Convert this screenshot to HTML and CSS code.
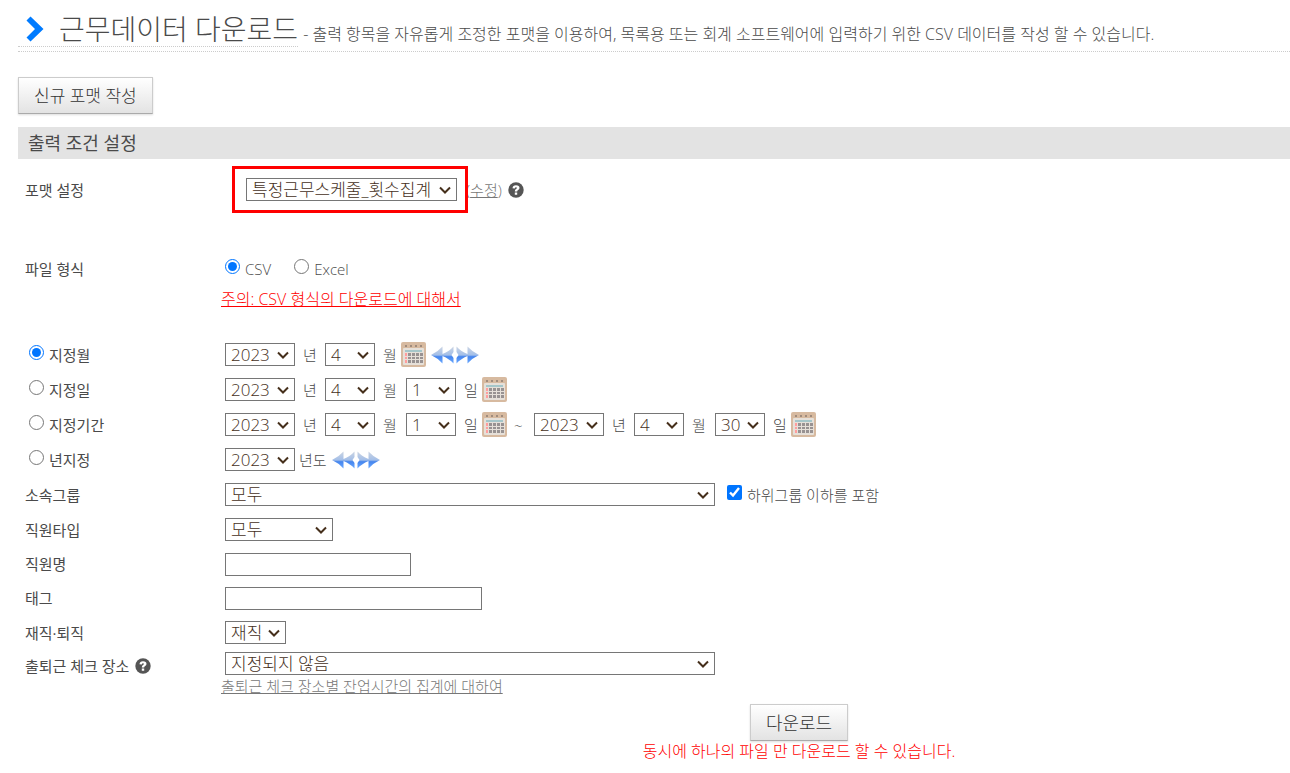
FILE: index.html
```
<!DOCTYPE html>
<html lang="ko">
<head>
<meta charset="utf-8">
<meta name="viewport" content="width=device-width, initial-scale=1">
<title>근무데이터 다운로드</title>
<link rel="stylesheet" href="styles.css">
</head>
<body>
<svg class="defs" aria-hidden="true">
  <defs>
    <linearGradient id="blue" x1="0" y1="0" x2="0" y2="1">
      <stop offset="0" stop-color="#ccd5e3"/>
      <stop offset="0.5" stop-color="#a4bfe8"/>
      <stop offset="0.6" stop-color="#4585ee"/>
      <stop offset="1" stop-color="#6ba9ff"/>
    </linearGradient>
    <symbol id="calendar" viewBox="0 0 25 25">
      <rect width="25" height="25" rx="2" fill="#d7baa0"/>
      <path d="M4 3h2v2H4zM9 3h2v2H9zM14 3h2v2h-2zM19 3h2v2h-2z" fill="#a08c7d"/>
      <rect x="2" y="6" width="21" height="17" rx="1" fill="#e6e0d9"/>
      <path d="M4 8h17v2H4z" fill="#a5c6c9"/>
      <path d="M4 11h2v3H4zM4 15h2v2H4zM4 18h2v3H4z" fill="#ff9d9d"/>
      <path d="M7 11h3v3H7zM11 11h3v3h-3zM15 11h3v3h-3zM19 11h3v3h-3zM7 15h3v2H7zM11 15h3v2h-3zM15 15h3v2h-3zM19 15h3v2h-3zM7 18h3v3H7zM11 18h3v3h-3zM15 18h3v3h-3zM19 18h3v3h-3z" fill="#989292"/>
    </symbol>
    <symbol id="forward" viewBox="0 0 24 18">
      <path d="M1 0.500Q5 5 12 8V0.500Q17 6 23.500 9Q17 12 12 17.500V10Q5 13 1 17.500V12L3 9L1 6z" fill="url(#blue)"/>
    </symbol>
    <symbol id="help" viewBox="0 0 16 16">
      <circle cx="8" cy="8" r="7.700" fill="#555"/>
      <path d="M4.500 6.200Q4.700 3.200 8 3.200Q11.500 3.200 11.500 6Q11.500 7.500 9.800 8.300Q9.200 8.600 9.200 9.500H6.800Q6.700 7.800 8 7Q8.900 6.500 8.900 6Q8.900 5.300 8 5.300Q7 5.300 6.800 6.500zM6.800 10.500h2.400v2.300H6.800z" fill="#fff"/>
    </symbol>
  </defs>
</svg>
<main class="page">
  <header class="header">
    <h1 class="title">
      <svg class="title-mark" viewBox="0 0 18 26" aria-hidden="true"><path d="M4.500 0.500L17.500 13L4.500 25.500L0.500 21.500L9 13L0.500 4.500z" fill="#007bff"/></svg>
      <span>근무데이터 다운로드</span>
    </h1>
    <p class="summary">- 출력 항목을 자유롭게 조정한 포맷을 이용하여, 목록용 또는 회계 소프트웨어에 입력하기 위한 CSV 데이터를 작성 할 수 있습니다.</p>
  </header>

  <button class="button" type="button">신규 포맷 작성</button>
  <h2 class="section">출력 조건 설정</h2>

  <form class="form">
    <div class="row row-format">
      <label class="name" for="format">포맷 설정</label>
      <div class="field">
        <span class="highlight"><select id="format" class="select w-format"><option>특정근무스케줄_횟수집계</option></select></span>
        <span class="edit">(<a class="link" href="#">수정</a>)</span>
        <svg class="help" role="img" aria-label="도움말"><use href="#help"/></svg>
      </div>
    </div>
    <div class="row" role="radiogroup" aria-labelledby="file-type">
      <span class="name" id="file-type">파일 형식</span>
      <div class="field">
        <label class="choice"><input class="tick" type="radio" name="type" checked>CSV</label>
        <label class="choice choice-next"><input class="tick" type="radio" name="type">Excel</label>
      </div>
    </div>
    <p class="notice"><a class="warning" href="#">주의: CSV 형식의 다운로드에 대해서</a></p>

    <div class="row">
      <label class="name choice period"><input class="tick" type="radio" name="period" checked>지정월</label>
      <div class="field">
        <select class="select w-year" aria-label="년"><option>2023</option></select><span class="unit">년</span>
        <select class="select w-short" aria-label="월"><option>4</option></select><span class="unit unit-end">월</span>
        <button class="icon" type="button" aria-label="달력"><svg class="calendar"><use href="#calendar"/></svg></button>
        <button class="icon step" type="button" aria-label="이전"><svg class="arrow arrow-back"><use href="#forward"/></svg></button>
        <button class="icon" type="button" aria-label="다음"><svg class="arrow"><use href="#forward"/></svg></button>
      </div>
    </div>
    <div class="row">
      <label class="name choice period"><input class="tick" type="radio" name="period">지정일</label>
      <div class="field">
        <select class="select w-year" aria-label="년"><option>2023</option></select><span class="unit">년</span>
        <select class="select w-short" aria-label="월"><option>4</option></select><span class="unit unit-month">월</span>
        <select class="select w-short" aria-label="일"><option>1</option></select><span class="unit unit-end">일</span>
        <button class="icon" type="button" aria-label="달력"><svg class="calendar"><use href="#calendar"/></svg></button>
      </div>
    </div>
    <div class="row">
      <label class="name choice period"><input class="tick" type="radio" name="period">지정기간</label>
      <div class="field">
        <select class="select w-year" aria-label="시작 년"><option>2023</option></select><span class="unit">년</span>
        <select class="select w-short" aria-label="시작 월"><option>4</option></select><span class="unit unit-month">월</span>
        <select class="select w-short" aria-label="시작 일"><option>1</option></select><span class="unit unit-end">일</span>
        <button class="icon" type="button" aria-label="시작일 달력"><svg class="calendar"><use href="#calendar"/></svg></button>
        <span class="range">~</span>
        <select class="select w-year" aria-label="종료 년"><option>2023</option></select><span class="unit">년</span>
        <select class="select w-short" aria-label="종료 월"><option>4</option></select><span class="unit unit-month">월</span>
        <select class="select w-short" aria-label="종료 일"><option>30</option></select><span class="unit unit-end">일</span>
        <button class="icon" type="button" aria-label="종료일 달력"><svg class="calendar"><use href="#calendar"/></svg></button>
      </div>
    </div>
    <div class="row">
      <label class="name choice period"><input class="tick" type="radio" name="period">년지정</label>
      <div class="field">
        <select class="select w-year" aria-label="년도"><option>2023</option></select><span class="unit-year">년도</span>
        <button class="icon" type="button" aria-label="이전 년도"><svg class="arrow arrow-back"><use href="#forward"/></svg></button>
        <button class="icon" type="button" aria-label="다음 년도"><svg class="arrow"><use href="#forward"/></svg></button>
      </div>
    </div>
    <div class="row">
      <label class="name" for="group">소속그룹</label>
      <div class="field">
        <select id="group" class="select w-wide"><option>모두</option></select>
        <label class="choice include"><input class="tick" type="checkbox" checked>하위그룹 이하를 포함</label>
      </div>
    </div>
    <div class="row">
      <label class="name" for="kind">직원타입</label>
      <div class="field"><select id="kind" class="select w-kind"><option>모두</option></select></div>
    </div>
    <div class="row row-short">
      <label class="name" for="employee">직원명</label>
      <div class="field"><input id="employee" class="text w-employee" type="text"></div>
    </div>
    <div class="row row-short">
      <label class="name" for="tag">태그</label>
      <div class="field"><input id="tag" class="text w-tag" type="text"></div>
    </div>
    <div class="row">
      <label class="name" for="status">재직·퇴직</label>
      <div class="field"><select id="status" class="select w-status"><option>재직</option></select></div>
    </div>
    <div class="row row-place">
      <span class="name name-help"><label for="place">출퇴근 체크 장소</label><svg class="help" role="img" aria-label="도움말"><use href="#help"/></svg></span>
      <div class="field"><select id="place" class="select w-wide"><option>지정되지 않음</option></select></div>
    </div>
    <p class="about"><a class="link" href="#">출퇴근 체크 장소별 잔업시간의 집계에 대하여</a></p>
    <div class="submit">
      <button class="button button-large" type="submit">다운로드</button>
      <p class="limit">동시에 하나의 파일 만 다운로드 할 수 있습니다.</p>
    </div>
  </form>
</main>
</body>
</html>
```
FILE: styles.css
```
* { box-sizing: border-box; }

body {
  margin: 0;
  background: #fff;
  color: #4a4a4a;
  font: 300 15px/20px "Open Sans", "Noto Sans CJK KR", sans-serif;
}

h1, h2, p { margin: 0; font-weight: 300; }

.defs { position: absolute; width: 0; height: 0; }

.page { padding: 12px 0 12px 18px; }

.header {
  display: flex;
  align-items: flex-start;
  gap: 5px;
  height: 40px;
  margin-bottom: 25px;
  border-bottom: 1px dotted #ccc;
}

.title {
  display: flex;
  align-items: center;
  gap: 15px;
  height: 35px;
  padding-left: 8px;
  border-bottom: 1px dotted #ccc;
  font-size: 28px;
  line-height: 36px;
  white-space: nowrap;
}

.title-mark { width: 18px; height: 26px; }

.summary { padding-top: 12px; font-size: 16px; white-space: nowrap; }

.button {
  display: block;
  height: 37px;
  padding: 0 15px;
  border: 1px solid #ccc;
  border-bottom-color: #aaa;
  background: linear-gradient(#fff, #e3e3e3);
  box-shadow: 0 1px 2px #ddd;
  color: #333;
  font: inherit;
  font-size: 17px;
}

.button-large { font-size: 18px; }

.section {
  margin: 13px 0;
  padding: 0 10px;
  background: #e3e3e3;
  font-size: 18px;
  font-weight: 400;
  line-height: 32px;
}

.form { padding-left: 7px; }

.row { display: flex; align-items: center; min-height: 35px; }
.row-format { margin-bottom: 44px; }
.row-short { min-height: 34px; }
.row-place { min-height: 27px; }

.name { flex: 0 0 200px; font-weight: 400; }
.name-help { display: flex; align-items: center; gap: 6px; padding-top: 4px; }
.field { display: flex; align-items: center; }

.choice { display: flex; align-items: center; }
.choice-next { margin-left: 23px; }
.period { padding-left: 4px; }
.include { margin-left: 12px; }

.tick {
  width: 15px;
  height: 15px;
  margin: 0 5px 5px 0;
  accent-color: #0075ff;
}

.select {
  height: 23px;
  padding: 0 20px 0 5px;
  border: 1px solid #767676;
  border-radius: 0;
  appearance: none;
  background: #fff url("data:image/svg+xml,%3Csvg xmlns='http://www.w3.org/2000/svg' width='12' height='8'%3E%3Cpath d='M1 1.500L6 6.500L11 1.500' fill='none' stroke='%23452f1b' stroke-width='2'/%3E%3C/svg%3E") no-repeat right 5px center;
  color: #452f1b;
  font: inherit;
  font-size: 17px;
  line-height: 21px;
}

.text {
  height: 23px;
  padding: 0 5px;
  border: 1px solid #767676;
  font: inherit;
}

.w-year { width: 70px; }
.w-short { width: 50px; }
.w-format { width: 211px; }
.w-wide { width: 490px; }
.w-kind { width: 108px; }
.w-status { width: 61px; }
.w-employee { width: 186px; }
.w-tag { width: 257px; }

.highlight { position: relative; display: flex; margin-left: 21px; }
.highlight::after {
  content: "";
  position: absolute;
  inset: -12px -11px -12px -14px;
  border: 3px solid #f00;
  pointer-events: none;
}

.edit { margin: 0 6px 0 9px; color: #777; }
.help { width: 16px; height: 16px; }
.link { color: #777; }

.unit { width: 30px; padding-left: 8px; }
.unit-month { width: 31px; }
.unit-end { width: 26px; }
.unit-year { padding: 0 4px; }
.range { width: 27px; padding-left: 7px; }

.icon { padding: 0; border: 0; background: none; font-size: 0; line-height: 0; }
.step { margin-left: 4px; }
.calendar { width: 25px; height: 25px; }
.arrow { width: 25px; height: 18px; }
.arrow-back { transform: scaleX(-1); }

.notice { margin-bottom: 25px; padding-left: 196px; font-size: 16px; line-height: 26px; }
.warning { color: #f00; }
.about { padding-left: 196px; line-height: 18px; }

.submit {
  display: flex;
  flex-direction: column;
  align-items: center;
  padding: 9px 0 0 283px;
}

.limit { color: #f00; font-size: 16px; }
```
